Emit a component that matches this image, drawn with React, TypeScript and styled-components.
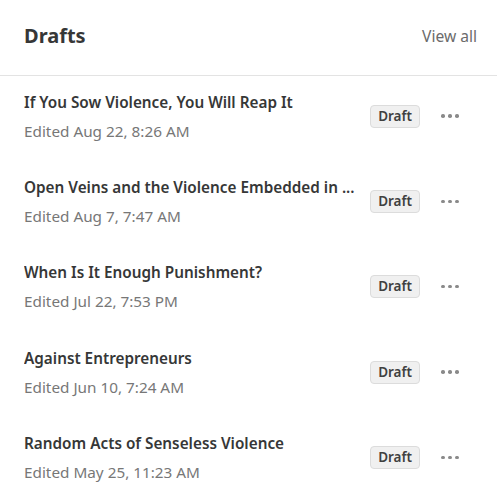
import React from 'react';
import styled, { createGlobalStyle } from 'styled-components';

const GlobalStyle = createGlobalStyle`
	* {
		box-sizing: border-box;
	}
	body {
		margin: 0;
		background: #ffffff;
		font-family: 'Noto Sans', 'Open Sans', sans-serif;
	}
`;

const Panel = styled.section`
	width: 497px;
	height: 496px;
	background: #ffffff;
	display: flex;
	flex-direction: column;
	overflow: hidden;
`;

const Header = styled.header`
	flex-shrink: 0;
	height: 76px;
	padding: 0 20px 4px 24px;
	display: flex;
	align-items: center;
	justify-content: space-between;
	border-bottom: 1px solid #e3e3e3;
`;

const Heading = styled.h2`
	margin: 0;
	font-size: 20px;
	font-weight: 700;
	color: #363737;
`;

const ViewAll = styled.a`
	font-size: 15.6px;
	color: #6b6b6b;
	cursor: pointer;
`;

const List = styled.ul`
	flex-shrink: 0;
	list-style: none;
	margin: 0;
	padding: 0;
`;

const Row = styled.li`
	height: 85.3px;
	padding: 15px 0 20px 24px;
	display: flex;
	align-items: center;
`;

const Info = styled.div`
	flex: 1;
	min-width: 0;
	display: flex;
	flex-direction: column;
	gap: 9px;
`;

const Title = styled.div`
	font-size: 15.3px;
	font-weight: 600;
	color: #363737;
	line-height: 20px;
	white-space: nowrap;
	overflow: hidden;
`;

const Edited = styled.div`
	font-size: 15.3px;
	color: #777777;
	line-height: 20px;
`;

const Badge = styled.span`
	margin-left: 14px;
	padding: 2px 7px;
	border: 1px solid #dcdcdc;
	border-radius: 4px;
	background: #f0f0f0;
	font-size: 13.5px;
	font-weight: 600;
	color: #404040;
	line-height: 17px;
`;

const MoreButton = styled.button`
	width: 32px;
	height: 24px;
	margin: 0 31px 0 14px;
	padding: 0;
	border: none;
	background: transparent;
	display: flex;
	align-items: center;
	justify-content: center;
	gap: 3.5px;
	cursor: pointer;
`;

const Dot = styled.span`
	width: 3.5px;
	height: 3.5px;
	border-radius: 50%;
	background: #8a8a8a;
`;

const drafts = [
	{ title: 'If You Sow Violence, You Will Reap It', edited: 'Edited Aug 22, 8:26 AM' },
	{ title: 'Open Veins and the Violence Embedded in ...', edited: 'Edited Aug 7, 7:47 AM' },
	{ title: 'When Is It Enough Punishment?', edited: 'Edited Jul 22, 7:53 PM' },
	{ title: 'Against Entrepreneurs', edited: 'Edited Jun 10, 7:24 AM' },
	{ title: 'Random Acts of Senseless Violence', edited: 'Edited May 25, 11:23 AM' },
];

const App = () => {
	return (
		<>
			<GlobalStyle />
			<Panel>
				<Header>
					<Heading>Drafts</Heading>
					<ViewAll>View all</ViewAll>
				</Header>
				<List>
					{drafts.map((d) => (
						<Row key={d.title}>
							<Info>
								<Title>{d.title}</Title>
								<Edited>{d.edited}</Edited>
							</Info>
							<Badge>Draft</Badge>
							<MoreButton aria-label="More">
								<Dot />
								<Dot />
								<Dot />
							</MoreButton>
						</Row>
					))}
				</List>
			</Panel>
		</>
	);
};

export default App;
